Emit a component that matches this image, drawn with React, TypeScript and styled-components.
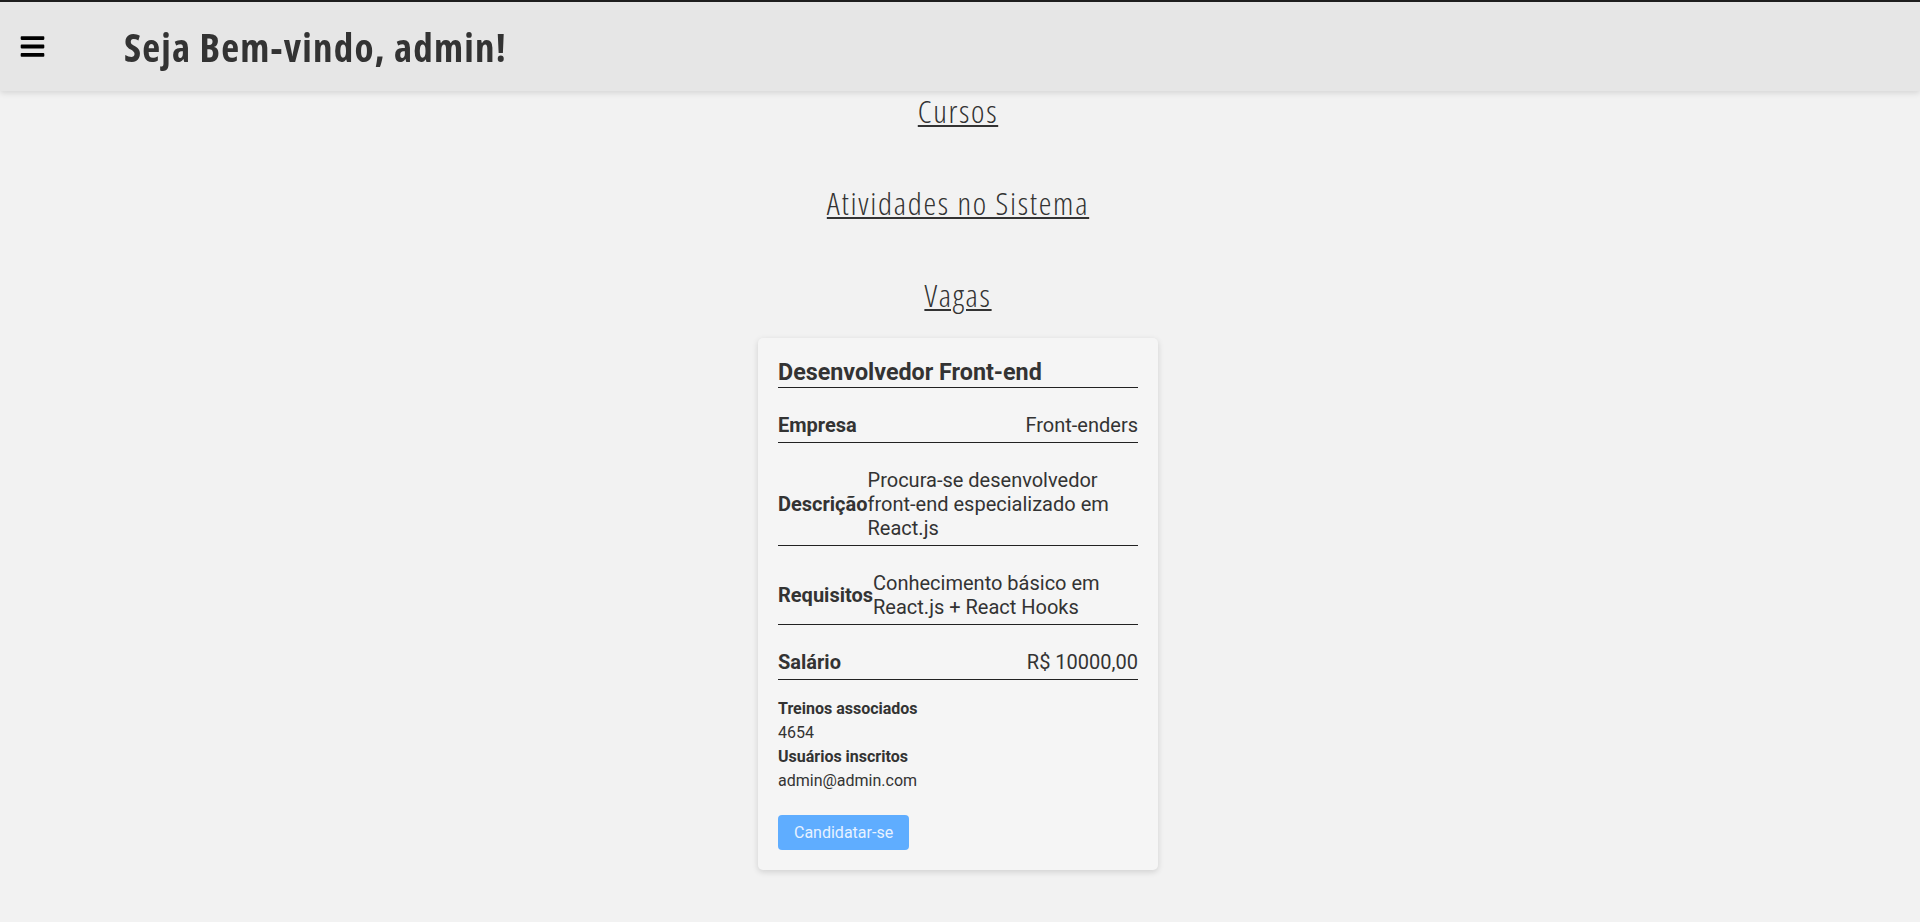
import React from "react";
import styled, { createGlobalStyle } from "styled-components";
import { FaBars } from "react-icons/fa";

const GlobalStyle = createGlobalStyle`
  * {
    box-sizing: border-box;
  }
  body {
    margin: 0;
    background: #f2f2f2;
    color: #333;
    font-family: Roboto, "Liberation Sans", sans-serif;
  }
`;

const vaga = {
  titulo: "Desenvolvedor Front-end",
  empresa: "Front-enders",
  descricao: "Procura-se desenvolvedor front-end especializado em React.js",
  requisitos: "Conhecimento básico em React.js + React Hooks",
  salario: "R$ 10000,00",
  treinos: "4654",
  inscritos: ["admin@admin.com"],
};

const App: React.FC = () => {
  return (
    <>
      <GlobalStyle />
      <Header>
        <MenuButton aria-label="menu">
          <FaBars size={27} />
        </MenuButton>
        <Welcome>Seja Bem-vindo, admin!</Welcome>
      </Header>
      <Main>
        <Links>
          <PageLink href="#cursos">Cursos</PageLink>
          <PageLink href="#atividades">Atividades no Sistema</PageLink>
          <PageLink href="#vagas">Vagas</PageLink>
        </Links>

        <Card>
          <CardTitle>{vaga.titulo}</CardTitle>
          <Row>
            <Label>Empresa</Label>
            <Value>{vaga.empresa}</Value>
          </Row>
          <Row>
            <Label>Descrição</Label>
            <Value>{vaga.descricao}</Value>
          </Row>
          <Row>
            <Label>Requisitos</Label>
            <Value>{vaga.requisitos}</Value>
          </Row>
          <Row>
            <Label>Salário</Label>
            <Value>{vaga.salario}</Value>
          </Row>

          <Extra>
            <ExtraTitle>Treinos associados</ExtraTitle>
            <span>{vaga.treinos}</span>
            <ExtraTitle>Usuários inscritos</ExtraTitle>
            {vaga.inscritos.map((email) => (
              <span key={email}>{email}</span>
            ))}
          </Extra>

          <ApplyButton>Candidatar-se</ApplyButton>
        </Card>
      </Main>
    </>
  );
};

export default App;

const Header = styled.header`
  position: fixed;
  top: 0;
  left: 0;
  right: 0;
  z-index: 10;
  height: 91px;
  display: flex;
  align-items: center;
  gap: 68px;
  padding: 0 20px;
  background: #e6e6e6;
  border-top: 2px solid #1e1e1e;
  box-shadow: 0 2px 6px rgba(0, 0, 0, 0.12);
`;

const MenuButton = styled.button`
  display: flex;
  align-items: center;
  justify-content: center;
  width: 48px;
  height: 48px;
  margin-left: -12px;
  padding: 0;
  border: none;
  background: transparent;
  color: #000;
  cursor: pointer;
`;

const Welcome = styled.h1`
  margin: 0;
  font-family: "Open Sans", "DejaVu Sans Condensed", sans-serif;
  font-stretch: 75%;
  font-size: 39px;
  font-weight: 700;
  letter-spacing: 1.2px;
  color: #333;
`;

const Main = styled.main`
  padding: 93px 4px 60px 0;
  display: flex;
  flex-direction: column;
  align-items: center;
`;

const Links = styled.nav`
  display: flex;
  flex-direction: column;
  align-items: center;
  gap: 56px;
`;

const PageLink = styled.a`
  font-family: "Open Sans", "DejaVu Sans Condensed", sans-serif;
  font-stretch: 75%;
  font-size: 32px;
  line-height: 36px;
  font-weight: 300;
  letter-spacing: 1.7px;
  color: #333;
  text-decoration: underline;
  text-decoration-thickness: 2px;
  text-underline-offset: 2px;
`;

const Card = styled.article`
  width: 400px;
  margin-top: 25px;
  padding: 20px;
  background: #f5f5f5;
  border-radius: 5px;
  box-shadow: 0 2px 6px rgba(0, 0, 0, 0.14);
  font-family: Roboto, "Liberation Sans", sans-serif;
  color: #333;
`;

const CardTitle = styled.h2`
  margin: 0;
  padding-bottom: 1px;
  font-size: 23.3px;
  font-weight: 700;
  line-height: 28px;
  border-bottom: 1px solid #222;
`;

const Row = styled.div`
  display: flex;
  justify-content: space-between;
  align-items: center;
  margin-top: 20px;
  padding: 5px 0;
  font-size: 20px;
  line-height: normal;
  border-bottom: 1px solid #222;
`;

const Label = styled.strong`
  flex-shrink: 0;
  font-weight: 700;
`;

const Value = styled.span`
  text-align: left;
`;

const Extra = styled.div`
  display: flex;
  flex-direction: column;
  margin-top: 17px;
  font-size: 16px;
  line-height: 24px;
`;

const ExtraTitle = styled.strong`
  font-weight: 700;
`;

const ApplyButton = styled.button`
  display: block;
  margin-top: 22px;
  padding: 8px 16px;
  border: none;
  border-radius: 4px;
  background: #5fadff;
  color: #e8f2ff;
  font-family: Roboto, "Liberation Sans", sans-serif;
  font-size: 16px;
  line-height: 19px;
  cursor: pointer;
`;
